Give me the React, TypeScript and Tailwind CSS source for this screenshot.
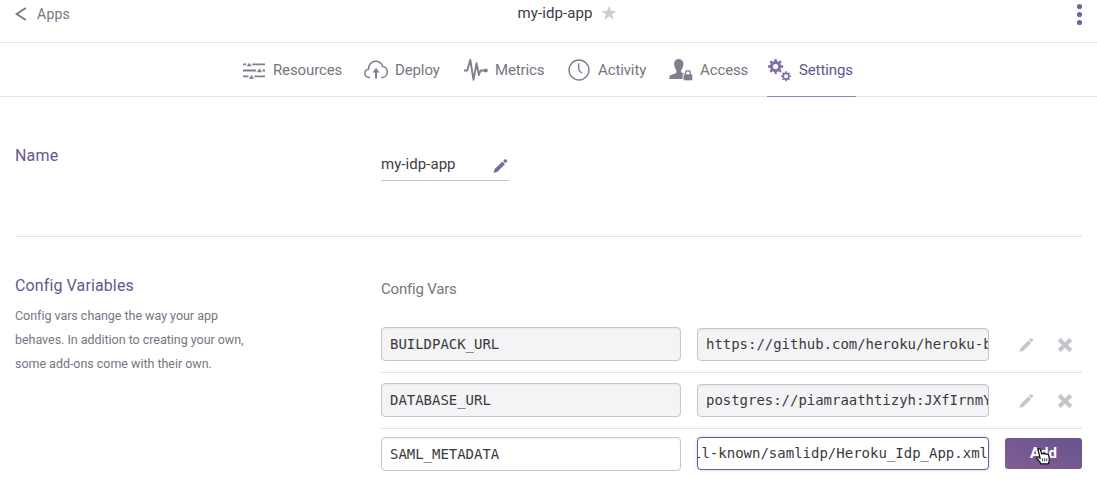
import type { ReactNode } from "react";

const gear = (cx: number, cy: number, teeth: number, outer: number, inner: number) => {
  const pts: string[] = [];
  const step = (Math.PI * 2) / teeth;
  for (let i = 0; i < teeth; i++) {
    const a = i * step - Math.PI / 2;
    const offsets: [number, number][] = [
      [-0.27, inner],
      [-0.2, outer],
      [0.2, outer],
      [0.27, inner],
    ];
    for (const [o, r] of offsets) {
      pts.push(`${(cx + Math.cos(a + o * step) * r).toFixed(2)} ${(cy + Math.sin(a + o * step) * r).toFixed(2)}`);
    }
  }
  return `M${pts.join("L")}Z`;
};

const ring = (cx: number, cy: number, r: number) =>
  `M${cx - r} ${cy}a${r} ${r} 0 1 0 ${2 * r} 0a${r} ${r} 0 1 0 ${-2 * r} 0Z`;

const ResourcesIcon = () => (
  <svg width="24" height="24" viewBox="0 0 24 24" fill="none" stroke="#7f7f8d" strokeWidth="1.8">
    <path d="M1 6.400h3.200M10.300 6.400H23M1 12.500h13.200M20.500 12.500H23M1 18.400h5.500M12.500 18.400H23" />
    <path d="M4.700 8.200 7.200 4.800l2.600 3.400zM14.800 14.200l2.600-3.800 2.600 3.800zM6.900 20.700l2.600-3.800 2.600 3.800z" fill="#7f7f8d" stroke="none" />
  </svg>
);

const DeployIcon = () => (
  <svg width="24" height="24" viewBox="0 0 24 24" fill="none" stroke="#7f7f8d" strokeWidth="1.500" strokeLinecap="round">
    <path d="M5.500 19.500C2.500 19.500.8 17.600.8 15.300c0-2.200 1.600-3.900 3.700-4.100C4.400 6.500 7.600 3.200 11.600 3.200c3.400 0 6 2 6.800 5.200 3 .1 4.900 2.500 4.900 5.400 0 3.200-2.200 5.700-5.500 5.700" />
    <path d="M12 20.500V13" strokeWidth="2" strokeLinecap="butt" />
    <path d="M8.600 14.400 12 9.700l3.400 4.700z" fill="#7f7f8d" stroke="none" />
  </svg>
);

const MetricsIcon = () => (
  <svg width="24" height="24" viewBox="0 0 24 24" fill="none" stroke="#7f7f8d" strokeWidth="1.900" strokeLinejoin="round">
    <path d="M0 12.500h3.200L6.300 1.800l3.200 20 3-16.500 2.400 11.700 1.700-4.500H21" />
    <circle cx="21.800" cy="12.500" r="2" fill="#7f7f8d" stroke="none" />
  </svg>
);

const ActivityIcon = () => (
  <svg width="24" height="24" viewBox="0 0 24 24" fill="none" stroke="#7f7f8d" strokeWidth="1.400">
    <circle cx="12" cy="12" r="10" />
    <path d="M11.500 5.200 12 12.500l3 2.700" />
  </svg>
);

const AccessIcon = () => (
  <svg width="24" height="24" viewBox="0 0 24 24" fill="#7f7f8d">
    <path d="M9.700 1C6.500 1 5 3.300 5.200 6.300c.1 2.500 1 4.600 2.200 5.900v2.300C6.500 16 2.500 16.200 1.200 17.600.4 18.500.2 19.900.2 21H13.700v-4.800l1.300-.8c-1.400-.5-2.500-.7-2.800-1.200v-2c1.200-1.300 2-3.400 2.200-5.900C14.600 3.300 12.900 1 9.700 1z" />
    <path d="M14.600 16.300h8.700v6h-8.700z" />
    <path d="M16.500 16.500v-1.300c0-1.600.9-2.500 2.400-2.500s2.400.9 2.400 2.500v1.300" fill="none" stroke="#7f7f8d" strokeWidth="1.300" />
  </svg>
);

const SettingsIcon = () => (
  <svg width="24" height="24" viewBox="0 0 24 24" fill="#8070a8" fillRule="evenodd">
    <path d={gear(8.600, 8.500, 8, 7.700, 5.700) + ring(8.600, 8.500, 2.600)} />
    <path d={gear(19, 18.200, 8, 5, 3.800) + ring(19, 18.200, 2)} />
  </svg>
);

const Pencil = ({ className }: { className: string }) => (
  <svg width="16" height="16" viewBox="0 0 16 16" fill="currentColor" className={className}>
    <path d="M1.500 15l1.200-4.100 7.700-7.300 2.600 2.600-7.500 7.500zM11.200 2.900l1.300-1.300c.6-.5 1.200-.5 1.800 0l.5.600c.5.600.5 1.200 0 1.800l-1.200 1.300z" />
  </svg>
);

const Cross = () => (
  <svg width="16" height="16" viewBox="0 0 16 16" stroke="#c5c5cc" strokeWidth="4.200">
    <path d="M2.200 2.400 13.800 13.600M13.800 2.400 2.200 13.600" />
  </svg>
);

const HandCursor = () => (
  <svg width="17" height="19" viewBox="0 0 17 19" className="absolute left-[30px] top-[9px]">
    <path
      d="M5.900 16.800c-.5-1.500-2.700-3.500-3.800-5.200-.9-1.400.6-2.300 1.600-1.400l1.500 1.500L3.200 3.200c-.4-1.800 1.700-2.300 2.200-.6l1.300 4.500c.5-1.100 2-1 2.300 0 .5-.9 2-.7 2.300.3.700-.7 2-.3 2.200.7.500 2 1.400 4 .5 6.300l-.6 2.400z"
      fill="#fff" stroke="#111" strokeWidth="1.200" strokeLinejoin="round"
    />
    <path d="M7.700 11.300v3M9.700 11.300v3M11.700 11.300v3" stroke="#111" strokeWidth=".8" />
  </svg>
);

const Tab = ({ icon, label, width, active }: { icon: ReactNode; label: string; width: string; active?: boolean }) => (
  <div className={`flex h-[54px] shrink-0 items-center ${width} ${active ? "gap-2 border-b border-[#8f84b4] text-[#62548f]" : "gap-[7px] pb-px text-[#76767f]"}`}>
    {icon}
    <span className="text-[15px] leading-5 tracking-[-0.12px]">{label}</span>
  </div>
);

const Field = ({ value, size, tone }: { value: string; size: string; tone: string }) => (
  <div className={`flex items-center overflow-hidden whitespace-pre rounded border border-[#c6c6cc] font-['DejaVu_Sans_Mono',monospace] text-[14px] text-[#3a3a3d] shadow-[inset_0_1px_2px_rgba(0,0,0,0.06)] ${size} ${tone}`}>
    <span className="pl-2 tracking-[-0.03px]">{value}</span>
  </div>
);

const VarRow = ({ name, value }: { name: string; value: string }) => (
  <div className="flex h-14 items-start border-b border-[#e3e3e7] pt-[10px]">
    <Field value={name} size="h-[34px] w-[300px]" tone="bg-[#f4f4f6]" />
    <div className="w-4" />
    <Field value={value} size="mt-px h-[33px] w-[292px]" tone="bg-[#f4f4f6]" />
    <div className="flex h-[36px] flex-1 items-center justify-end gap-[23px] pr-[9px]">
      <Pencil className="text-[#c5c5cc]" />
      <Cross />
    </div>
  </div>
);

export default function App() {
  return (
    <div className="relative h-[501px] w-[1097px] overflow-hidden bg-white font-['Roboto',sans-serif] text-[#3c3c42]">
      <header className="grid h-[43px] grid-cols-3 items-start border-b border-[#e5e5e9] pl-[15px] pr-[14px]">
        <div className="flex h-7 items-center gap-[10px] text-[#76767f]">
          <svg width="12" height="14" viewBox="0 0 12 14" fill="none" stroke="#76767f" strokeWidth="1.800">
            <path d="M10.800 1 1.600 7l9.200 6" />
          </svg>
          <span className="text-[14px] tracking-[0.25px]">Apps</span>
        </div>
        <div className="flex h-[27px] items-center justify-center gap-2 pl-[36px]">
          <span className="text-[15px] tracking-[0.1px]">my-idp-app</span>
          <svg width="16" height="16" viewBox="0 0 16 16" fill="#cdcdd4" className="-mt-[2px]">
            <path d="M8 .5l1.900 5.300 5.600.1-4.500 3.400 1.700 5.500L8 11.500l-4.700 3.300L5 9.300.5 5.900l5.600-.1z" />
          </svg>
        </div>
        <svg width="8" height="28" viewBox="0 0 8 28" fill="#7464a0" className="justify-self-end">
          <circle cx="4.500" cy="6.500" r="2.600" />
          <circle cx="4.500" cy="14.500" r="2.600" />
          <circle cx="4.500" cy="22.500" r="2.600" />
        </svg>
      </header>

      <nav className="flex h-[54px] border-b border-[#e5e5e9] pl-[242px]">
        <Tab icon={<ResourcesIcon />} label="Resources" width="w-[122px]" />
        <Tab icon={<DeployIcon />} label="Deploy" width="w-[100px]" />
        <Tab icon={<MetricsIcon />} label="Metrics" width="w-[103px]" />
        <Tab icon={<ActivityIcon />} label="Activity" width="w-[102px]" />
        <Tab icon={<AccessIcon />} label="Access" width="w-[98px]" />
        <Tab icon={<SettingsIcon />} label="Settings" width="w-[89px]" active />
      </nav>

      <main className="pl-[15px] pr-[15px]">
        <section className="flex h-[140px] border-b border-[#e3e3e7]">
          <h2 className="w-[366px] pt-[47px] text-[16px] leading-6 tracking-[0.2px] text-[#66578f]">Name</h2>
          <div className="mt-[54px] flex h-[30px] w-[128px] justify-between border-b border-[#c2c2c8] pr-px">
            <span className="text-[15px] leading-[26px] tracking-[0.05px]">my-idp-app</span>
            <Pencil className="mt-[7px] text-[#7b6ba5]" />
          </div>
        </section>

        <section className="flex pt-9">
          <div className="w-[366px] shrink-0">
            <h2 className="pt-px text-[16px] leading-6 tracking-[0.12px] text-[#66578f]">Config Variables</h2>
            <p className="mt-[6px] whitespace-pre-line text-[12.500px] leading-6 tracking-[-0.03px] text-[#76767f]">
              {"Config vars change the way your app\nbehaves. In addition to creating your own,\nsome add-ons come with their own."}
            </p>
          </div>
          <div className="flex-1">
            <h3 className="h-[44px] pt-1 text-[15px] leading-6 tracking-[-0.2px] text-[#76767f]">Config Vars</h3>
            <VarRow name="BUILDPACK_URL" value="https://github.com/heroku/heroku-b" />
            <VarRow name="DATABASE_URL" value="postgres://piamraathtizyh:JXfIrnmY" />
            <div className="flex items-start pt-2">
              <Field value="SAML_METADATA" size="h-[34px] w-[300px]" tone="bg-white" />
              <div className="w-4" />
              <div className="flex h-[33px] w-[292px] items-center justify-end overflow-hidden whitespace-pre rounded border border-[#6a5a98] bg-white font-['DejaVu_Sans_Mono',monospace] text-[14px] text-[#3a3a3d] shadow-[0_0_3px_rgba(110,90,180,0.35)]">
                ll-known/samlidp/Heroku_Idp_App.xml
              </div>
              <button className="relative ml-4 mt-px h-[31px] w-[77px] rounded-[3px] bg-linear-to-tr from-[#845c92] to-[#665490] text-[15px] font-bold text-white">
                Add
                <HandCursor />
              </button>
            </div>
          </div>
        </section>
      </main>
    </div>
  );
}
